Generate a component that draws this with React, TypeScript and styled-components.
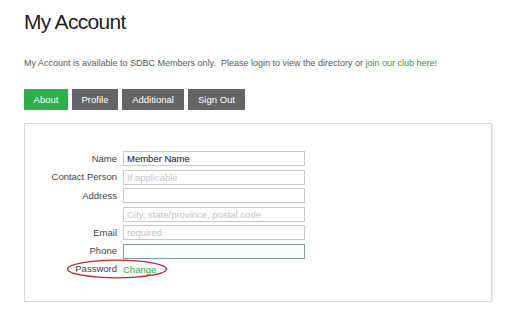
import React from "react";
import styled, { createGlobalStyle } from "styled-components";

const Global = createGlobalStyle`
  html, body { margin: 0; padding: 0; background: #fff; }
  body { font-family: "Liberation Sans", Arial, sans-serif; }
`;

const Page = styled.div`
  padding: 9px 19px 0 24px;
  width: 511px;
  box-sizing: border-box;
`;

const Title = styled.h1`
  margin: 0;
  font-size: 21px;
  line-height: 26px;
  letter-spacing: -0.7px;
  font-weight: normal;
  color: #1e1e1e;
`;

const Intro = styled.p`
  margin: 22px 0 0 0;
  font-size: 9px;
  line-height: 12px;
  color: #5a5a5a;
  white-space: pre;
`;

const JoinLink = styled.a`
  color: #2f9a3a;
  text-decoration: none;
`;

const Tabs = styled.div`
  display: flex;
  gap: 4px;
  margin-top: 20px;
`;

const Tab = styled.button<{ $active?: boolean; $w: number }>`
  width: ${(p) => p.$w}px;
  height: 21px;
  border: none;
  padding: 0;
  margin: 0;
  font-family: "Liberation Sans", Arial, sans-serif;
  font-size: 9.5px;
  color: #fff;
  background: ${(p) => (p.$active ? "#2cb14a" : "#666566")};
  cursor: pointer;
`;

const Panel = styled.div`
  margin-top: 13px;
  width: 468px;
  height: 179px;
  box-sizing: border-box;
  border: 1px solid #d8d8d8;
  box-shadow: 1px 1px 0 #ececec;
  padding: 27px 0 0 0;
`;

const Form = styled.div`
  display: grid;
  grid-template-columns: 92px 182px;
  column-gap: 6px;
  row-gap: 3.5px;
  align-items: center;
  position: relative;
`;

const Label = styled.label`
  font-size: 9.5px;
  line-height: 12px;
  color: #444;
  text-align: right;
`;

const Input = styled.input<{ $focus?: boolean }>`
  height: 15px;
  box-sizing: border-box;
  width: 182px;
  margin: 0;
  padding: 0 3px;
  font-family: "Liberation Sans", Arial, sans-serif;
  font-size: 9.5px;
  color: #111;
  border: 1px solid ${(p) => (p.$focus ? "#7d9ea3" : "#c9c9c9")};
  background: ${(p) => (p.$focus ? "#fbfefe" : "#fff")};
  outline: none;
  &::placeholder { color: #c4c4c4; }
`;

const ChangeCell = styled.div`
  line-height: 12px;
`;

const ChangeLink = styled.a`
  font-size: 9.5px;
  color: #3aa444;
  text-decoration: none;
`;

const PasswordRow = styled.div`
  display: contents;
`;

const Ellipse = styled.svg`
  position: absolute;
  left: 41px;
  top: 108px;
  pointer-events: none;
`;

export default function App() {
  return (
    <>
      <Global />
      <Page>
        <Title>My Account</Title>
        <Intro>
          {"My Account is available to SDBC Members only.  Please login to view the directory or "}
          <JoinLink href="#">join our club here!</JoinLink>
        </Intro>
        <Tabs>
          <Tab $active $w={44}>About</Tab>
          <Tab $w={46}>Profile</Tab>
          <Tab $w={62}>Additional</Tab>
          <Tab $w={57}>Sign Out</Tab>
        </Tabs>
        <Panel>
          <Form>
            <Label>Name</Label>
            <Input defaultValue="Member Name" />
            <Label>Contact Person</Label>
            <Input placeholder="If applicable" />
            <Label>Address</Label>
            <Input />
            <span />
            <Input placeholder="City, state/province, postal code" />
            <Label>Email</Label>
            <Input placeholder="required" />
            <Label>Phone</Label>
            <Input $focus />
            <PasswordRow>
              <Label>Password</Label>
              <ChangeCell>
                <ChangeLink href="#">Change</ChangeLink>
              </ChangeCell>
            </PasswordRow>
            <Ellipse width="102" height="20" viewBox="0 0 102 20">
              <ellipse cx="51" cy="10" rx="49.5" ry="8.8" fill="none" stroke="#c8262c" strokeWidth="1.3" />
            </Ellipse>
          </Form>
        </Panel>
      </Page>
    </>
  );
}
